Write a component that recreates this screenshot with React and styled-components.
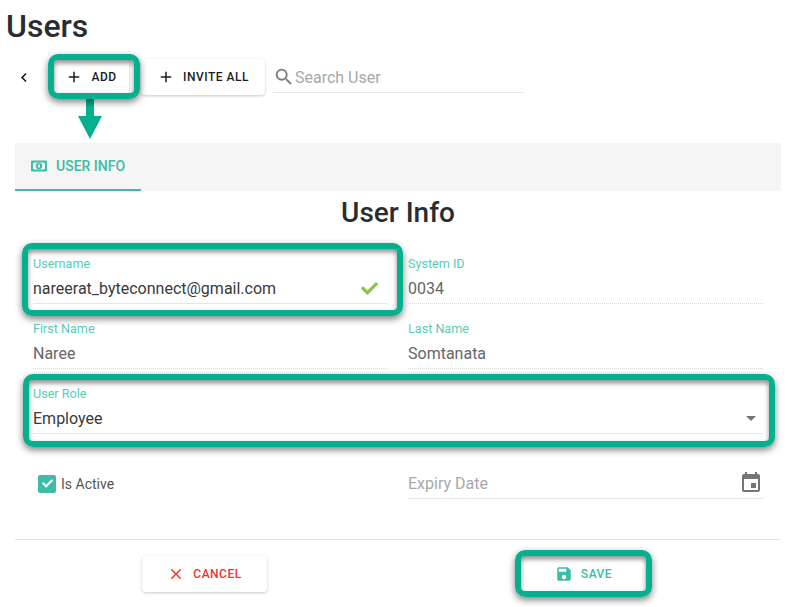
import styled, { createGlobalStyle } from "styled-components";
import { FaCheck } from "react-icons/fa";
import {
  MdAdd,
  MdArrowDropDown,
  MdChevronLeft,
  MdClose,
  MdEvent,
  MdSave,
  MdSearch,
} from "react-icons/md";

const teal = "#3dbca6";
const mark = "#06b08f";

const GlobalStyle = createGlobalStyle`
  body {
    margin: 0;
    background: #fff;
    font-family: Roboto, "Liberation Sans", sans-serif;
  }
`;

const Page = styled.div`
  width: 796px;
  height: 607px;
  padding: 0 15px;
  box-sizing: border-box;
  overflow: hidden;
`;

const Title = styled.h1`
  margin: 7px 0 0 -9px;
  font-size: 32px;
  line-height: 38px;
  font-weight: 500;
  color: #2a2d30;
`;

const Toolbar = styled.div`
  display: flex;
  align-items: center;
  height: 36px;
  margin-top: 14px;
`;

const BackButton = styled.div`
  display: flex;
  justify-content: center;
  width: 18px;
  margin-right: 20px;
  color: #111;
`;

const Anchor = styled.div`
  position: relative;
`;

const Highlight = styled.div`
  position: absolute;
  top: ${(p) => p.$top}px;
  bottom: ${(p) => p.$bottom}px;
  left: ${(p) => p.$left}px;
  right: ${(p) => p.$right}px;
  border: 6px solid ${mark};
  border-radius: 10px;
  box-shadow: 0 3px 7px rgba(0, 0, 0, 0.5), inset 0 3px 5px rgba(0, 0, 0, 0.45);
  pointer-events: none;
`;

const Button = styled.div`
  display: flex;
  align-items: center;
  justify-content: center;
  height: 36px;
  width: ${(p) => p.$width}px;
  margin-left: ${(p) => p.$offset || 0}px;
  border-radius: 4px;
  background: #fff;
  box-shadow: 0 1px 3px rgba(0, 0, 0, 0.22);
  font-size: 12px;
  font-weight: 500;
  letter-spacing: 0.5px;
  color: ${(p) => p.$color || "#1b1b1b"};
`;

const ButtonIcon = styled.span`
  display: flex;
  margin-right: 8px;
`;

const SearchBox = styled.div`
  display: flex;
  align-items: center;
  width: 250px;
  height: 34px;
  box-sizing: border-box;
  padding-top: 4px;
  margin: 0 0 3px 8px;
  border-bottom: 1px solid #e6e7eb;
  color: #7d7d7d;
`;

const SearchText = styled.span`
  font-size: 16px;
  color: #a8a8a8;
`;

const ArrowRow = styled.div`
  display: flex;
  padding-left: 63px;
  height: 48px;
`;

const TabBar = styled.div`
  display: flex;
  height: 48px;
  background: #f5f5f5;
`;

const Tab = styled.div`
  display: flex;
  align-items: center;
  gap: 9px;
  width: 126px;
  padding-left: 16px;
  box-sizing: border-box;
  border-bottom: 2px solid ${teal};
  font-size: 14px;
  font-weight: 500;
  color: ${teal};
`;

const Heading = styled.h2`
  margin: 4px 0 0;
  text-align: center;
  font-size: 28px;
  line-height: 36px;
  font-weight: 500;
  color: #2a2d30;
`;

const FormGrid = styled.div`
  display: grid;
  grid-template-columns: 355px 355px;
  column-gap: 20px;
  grid-auto-rows: 65px;
  padding: 0 18px;
  margin-top: 8px;
  align-items: end;
`;

const Field = styled(Anchor)`
  grid-column: ${(p) => (p.$wide ? "1 / -1" : "auto")};
  height: 46px;
  box-sizing: border-box;
  border-bottom: 1px ${(p) => (p.$dotted ? "dotted #d8d8d8" : "solid #e6e7eb")};
`;

const Label = styled.div`
  height: 12px;
  margin-bottom: 3px;
  font-size: 12.6px;
  line-height: 12px;
  color: #56cdb6;
`;

const Value = styled.div`
  display: flex;
  align-items: center;
  justify-content: space-between;
  height: 30px;
  font-size: 16px;
  color: ${(p) => p.$color || "#3a3a3a"};
`;

const FieldIcon = styled.span`
  display: flex;
  margin-right: ${(p) => p.$inset || 0}px;
  color: ${(p) => p.$color || "#757575"};
`;

const CheckRow = styled.div`
  display: flex;
  align-items: center;
  gap: 5px;
  height: 46px;
  box-sizing: border-box;
  padding: 15px 0 0 5px;
  font-size: 14px;
  color: #555;
`;

const CheckBox = styled.span`
  display: flex;
  align-items: center;
  justify-content: center;
  width: 18px;
  height: 18px;
  border-radius: 2px;
  background: ${teal};
  color: #fff;
`;

const Footer = styled.div`
  display: flex;
  gap: 254px;
  margin-top: 40px;
  padding: 16px 0 0 127px;
  border-top: 1px solid #e3e3e3;
`;

const BillIcon = () => (
  <svg width="16" height="12" viewBox="0 0 16 12">
    <rect x="0" y="0.5" width="16" height="11" rx="1" fill={teal} />
    <path d="M3 2.5h10l1 1v5l-1 1H3l-1-1v-5z" fill="#f5f5f5" />
    <circle cx="8" cy="6" r="3.2" fill={teal} />
    <rect x="7" y="4.5" width="2" height="3" fill="#f5f5f5" />
  </svg>
);

const App = () => {
  return (
    <Page>
      <GlobalStyle />
      <Title>Users</Title>
      <Toolbar>
        <BackButton>
          <MdChevronLeft size={27} />
        </BackButton>
        <Anchor>
          <Button $width={76}>
            <ButtonIcon>
              <MdAdd size={18} />
            </ButtonIcon>
            ADD
          </Button>
          <Highlight $top={-5} $bottom={-4} $left={-5} $right={-11} />
        </Anchor>
        <Button $width={124} $offset={12}>
          <ButtonIcon>
            <MdAdd size={18} />
          </ButtonIcon>
          INVITE ALL
        </Button>
        <SearchBox>
          <MdSearch size={22} />
          <SearchText>Search User</SearchText>
        </SearchBox>
      </Toolbar>
      <ArrowRow>
        <svg width="24" height="45" viewBox="0 0 24 45">
          <rect x="8" y="4" width="8" height="18" fill={mark} />
          <polygon points="0,21 24,21 12,44" fill={mark} />
        </svg>
      </ArrowRow>
      <TabBar>
        <Tab>
          <BillIcon />
          USER INFO
        </Tab>
      </TabBar>
      <Heading>User Info</Heading>
      <FormGrid>
        <Field>
          <Label>Username</Label>
          <Value>
            nareerat_byteconnect@gmail.com
            <FieldIcon $color="#8bc34a" $inset={10}>
              <FaCheck size={17} />
            </FieldIcon>
          </Value>
          <Highlight $top={-15} $bottom={-13} $left={-11} $right={-15} />
        </Field>
        <Field $dotted>
          <Label>System ID</Label>
          <Value $color="#666">0034</Value>
        </Field>
        <Field $dotted>
          <Label>First Name</Label>
          <Value $color="#666">Naree</Value>
        </Field>
        <Field $dotted>
          <Label>Last Name</Label>
          <Value $color="#666">Somtanata</Value>
        </Field>
        <Field $wide>
          <Label>User Role</Label>
          <Value>
            Employee
            <FieldIcon>
              <MdArrowDropDown size={24} />
            </FieldIcon>
          </Value>
          <Highlight $top={-14} $bottom={-14} $left={-10} $right={-12} />
        </Field>
        <CheckRow>
          <CheckBox>
            <FaCheck size={11} />
          </CheckBox>
          Is Active
        </CheckRow>
        <Field>
          <Label />
          <Value $color="#a8a8a8">
            Expiry Date
            <FieldIcon>
              <MdEvent size={24} />
            </FieldIcon>
          </Value>
        </Field>
      </FormGrid>
      <Footer>
        <Button $width={125} $color="#f5302e">
          <ButtonIcon>
            <MdClose size={18} />
          </ButtonIcon>
          CANCEL
        </Button>
        <Anchor>
          <Button $width={125} $color={teal}>
            <ButtonIcon>
              <MdSave size={18} />
            </ButtonIcon>
            SAVE
          </Button>
          <Highlight $top={-6} $bottom={-5} $left={-6} $right={-6} />
        </Anchor>
      </Footer>
    </Page>
  );
};

export default App;
